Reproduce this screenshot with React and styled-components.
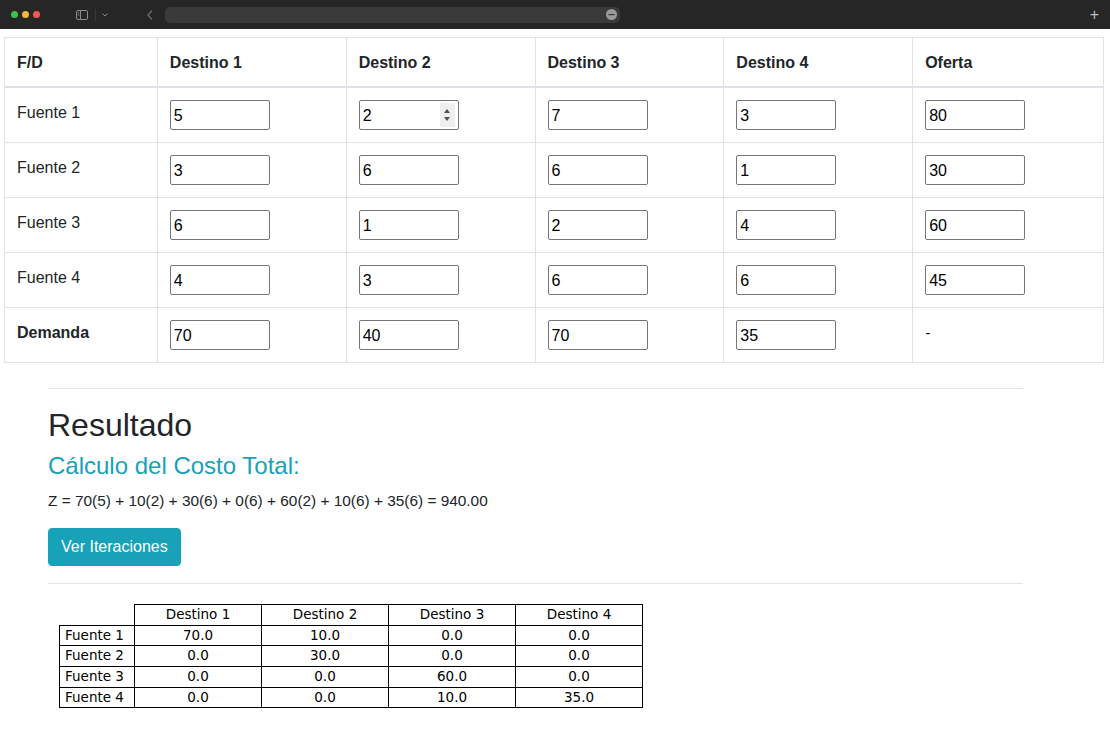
import React from "react";
import styled, { createGlobalStyle } from "styled-components";

const Global = createGlobalStyle`
  body {
    margin: 0;
    background: #fff;
    font-family: "Liberation Sans", Arial, sans-serif;
    color: #212529;
  }
`;

const Chrome = styled.div`
  height: 29px;
  background: #262626;
  display: flex;
  align-items: center;
  padding: 0 10px;
  box-sizing: border-box;
`;

const Lights = styled.div`
  display: flex;
  gap: 4px;
  margin-left: 1px;
`;

const Light = styled.span`
  width: 7px;
  height: 7px;
  border-radius: 50%;
  background: ${(p) => p.c};
`;

const ChromeIcon = styled.div`
  display: flex;
  align-items: center;
  margin-left: ${(p) => p.ml}px;
  color: #8a8a8a;
`;

const Divider = styled.span`
  width: 1px;
  height: 12px;
  background: #3a3a3a;
  margin-left: 7px;
`;

const UrlBar = styled.div`
  margin-left: 12px;
  width: 455px;
  height: 16px;
  background: #3a3a3a;
  border-radius: 5px;
  display: flex;
  align-items: center;
  justify-content: flex-end;
  padding-right: 3px;
  box-sizing: border-box;
`;

const Plus = styled.span`
  margin-left: auto;
  color: #bdbdbd;
  font-size: 16px;
  line-height: 1;
  margin-right: 1px;
`;

const Page = styled.div`
  padding: 8px 6px 0 4px;
`;

const Table = styled.table`
  width: 1100px;
  border-collapse: collapse;
  border: 1px solid #dee2e6;
  font-size: 16px;
  line-height: 24px;
`;

const Th = styled.th`
  text-align: left;
  font-weight: bold;
  padding: 13px 12px 11px;
  border: 1px solid #dee2e6;
  border-bottom: 2px solid #dee2e6;
  vertical-align: bottom;
  width: ${(p) => p.w}px;
  box-sizing: border-box;
`;

const Td = styled.td`
  padding: 12px;
  border: 1px solid #dee2e6;
  vertical-align: top;
  font-weight: ${(p) => (p.bold ? "bold" : "normal")};
  height: 30px;
`;

const Label = styled.div`
  padding-top: 1px;
`;

const InputWrap = styled.div`
  position: relative;
  width: 100px;
  height: 30px;
`;

const Input = styled.input`
  width: 100px;
  height: 30px;
  box-sizing: border-box;
  border: 1px solid #767676;
  border-radius: 2px;
  padding: 2px 3px 0;
  font-family: "Liberation Sans", Arial, sans-serif;
  font-size: 16px;
  color: #000;
  background: #fff;
  outline: none;
  display: block;
`;

const Spinner = styled.div`
  position: absolute;
  right: 4px;
  top: 3px;
  width: 15px;
  height: 24px;
  background: #efefef;
  display: flex;
  flex-direction: column;
  align-items: center;
  justify-content: center;
  gap: 4px;
`;

const Tri = styled.span`
  width: 0;
  height: 0;
  border-left: 3.5px solid transparent;
  border-right: 3.5px solid transparent;
  ${(p) => (p.up ? "border-bottom: 4px solid #505050;" : "border-top: 4px solid #505050;")}
`;

const Results = styled.div`
  margin: 0 87px 0 48px;
  padding-top: 25px;
`;

const Hr = styled.hr`
  border: 0;
  border-top: 1px solid #e5e5e5;
  margin: 0 0 ${(p) => p.mb}px;
`;

const Title = styled.h2`
  font-size: 32px;
  font-weight: 500;
  line-height: 1.2;
  margin: 0 0 8px;
  color: #212529;
`;

const Subtitle = styled.h4`
  font-size: 24px;
  font-weight: 500;
  line-height: 1.2;
  margin: 0 0 8px;
  color: #17a2b8;
`;

const Formula = styled.p`
  font-size: 15.4px;
  line-height: 24px;
  margin: 1px 0 15px;
  color: #212529;
`;

const Button = styled.button`
  background: #17a2b8;
  color: #fff;
  border: 1px solid #17a2b8;
  border-radius: 4px;
  padding: 6px 12px;
  font-family: "Liberation Sans", Arial, sans-serif;
  font-size: 16px;
  line-height: 24px;
  margin-bottom: 17px;
  cursor: pointer;
  display: block;
`;

const PlotTable = styled.table`
  margin-left: 11px;
  border-collapse: collapse;
  font-family: "DejaVu Sans", sans-serif;
  font-size: 13.5px;
  color: #000;
`;

const PCell = styled.td`
  border: ${(p) => (p.empty ? "none" : "1.3px solid #000")};
  height: 20.6px;
  padding: 0 5px;
  line-height: 1;
  text-align: ${(p) => (p.left ? "left" : "center")};
  width: ${(p) => p.w}px;
  box-sizing: border-box;
`;

const costs = [
  [5, 2, 7, 3, 80],
  [3, 6, 6, 1, 30],
  [6, 1, 2, 4, 60],
  [4, 3, 6, 6, 45],
];
const demand = [70, 40, 70, 35];
const alloc = [
  ["70.0", "10.0", "0.0", "0.0"],
  ["0.0", "30.0", "0.0", "0.0"],
  ["0.0", "0.0", "60.0", "0.0"],
  ["0.0", "0.0", "10.0", "35.0"],
];
const widths = [153, 189, 189, 189, 189, 191];

function Cell({ value, spin }) {
  return (
    <InputWrap>
      <Input type="text" defaultValue={value} />
      {spin && (
        <Spinner>
          <Tri up />
          <Tri />
        </Spinner>
      )}
    </InputWrap>
  );
}

function App() {
  return (
    <>
      <Global />
      <Chrome>
        <Lights>
          <Light c="#3cc14a" />
          <Light c="#f4b63c" />
          <Light c="#ef5b52" />
        </Lights>
        <ChromeIcon ml={36}>
          <svg width="12" height="10" viewBox="0 0 12 10" fill="none" stroke="#8c8c8c" strokeWidth="1">
            <rect x="0.5" y="0.5" width="11" height="9" rx="1.5" />
            <line x1="4.5" y1="0.5" x2="4.5" y2="9.5" />
            <line x1="1.8" y1="3" x2="3.2" y2="3" />
            <line x1="1.8" y1="5" x2="3.2" y2="5" />
          </svg>
        </ChromeIcon>
        <Divider />
        <ChromeIcon ml={6}>
          <svg width="6" height="4" viewBox="0 0 6 4" fill="none" stroke="#8c8c8c" strokeWidth="1">
            <polyline points="0.5,0.5 3,3 5.5,0.5" />
          </svg>
        </ChromeIcon>
        <ChromeIcon ml={39}>
          <svg width="6" height="10" viewBox="0 0 6 10" fill="none" stroke="#6e6e6e" strokeWidth="1.2">
            <polyline points="5,0.5 1,5 5,9.5" />
          </svg>
        </ChromeIcon>
        <UrlBar>
          <svg width="11" height="11" viewBox="0 0 11 11">
            <circle cx="5.5" cy="5.5" r="5.5" fill="#9a9a9a" />
            <rect x="2.5" y="5" width="6" height="1.2" fill="#3a3a3a" />
          </svg>
        </UrlBar>
        <Plus>+</Plus>
      </Chrome>
      <Page>
        <Table>
          <thead>
            <tr>
              <Th w={widths[0]}>F/D</Th>
              <Th w={widths[1]}>Destino 1</Th>
              <Th w={widths[2]}>Destino 2</Th>
              <Th w={widths[3]}>Destino 3</Th>
              <Th w={widths[4]}>Destino 4</Th>
              <Th w={widths[5]}>Oferta</Th>
            </tr>
          </thead>
          <tbody>
            {costs.map((row, i) => (
              <tr key={i}>
                <Td>
                  <Label>Fuente {i + 1}</Label>
                </Td>
                {row.map((v, j) => (
                  <Td key={j}>
                    <Cell value={v} spin={i === 0 && j === 1} />
                  </Td>
                ))}
              </tr>
            ))}
            <tr>
              <Td bold>
                <Label>Demanda</Label>
              </Td>
              {demand.map((v, j) => (
                <Td key={j}>
                  <Cell value={v} />
                </Td>
              ))}
              <Td>
                <Label>-</Label>
              </Td>
            </tr>
          </tbody>
        </Table>
      </Page>
      <Results>
        <Hr mb={17} />
        <Title>Resultado</Title>
        <Subtitle>Cálculo del Costo Total:</Subtitle>
        <Formula>Z = 70(5) + 10(2) + 30(6) + 0(6) + 60(2) + 10(6) + 35(6) = 940.00</Formula>
        <Button>Ver Iteraciones</Button>
        <Hr mb={20} />
        <PlotTable>
          <tbody>
            <tr>
              <PCell empty w={75} />
              <PCell w={127}>Destino 1</PCell>
              <PCell w={127}>Destino 2</PCell>
              <PCell w={127}>Destino 3</PCell>
              <PCell w={127}>Destino 4</PCell>
            </tr>
            {alloc.map((row, i) => (
              <tr key={i}>
                <PCell left>Fuente {i + 1}</PCell>
                {row.map((v, j) => (
                  <PCell key={j}>{v}</PCell>
                ))}
              </tr>
            ))}
          </tbody>
        </PlotTable>
      </Results>
    </>
  );
}

export default App;
